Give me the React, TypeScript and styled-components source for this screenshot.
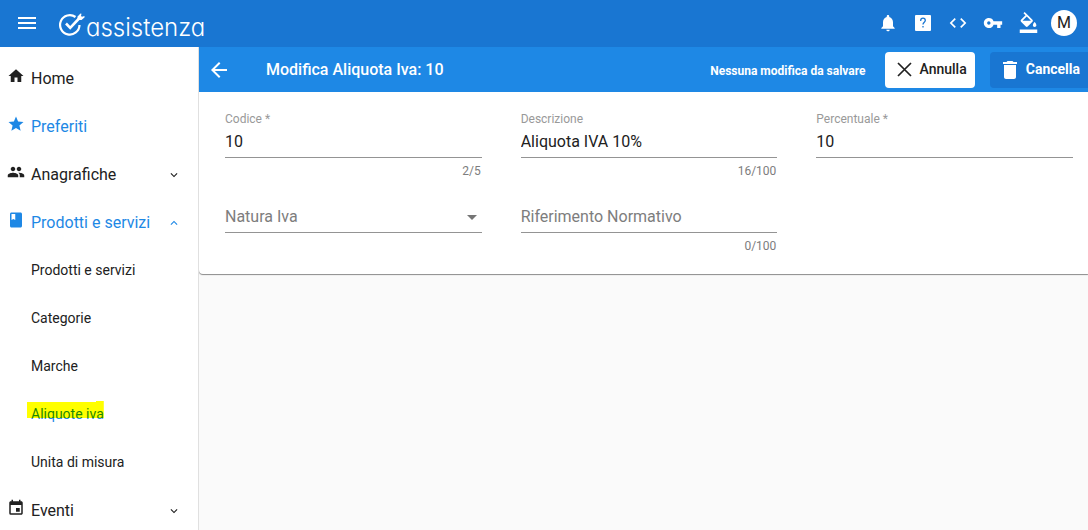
import React, { useState } from 'react';
import styled, { createGlobalStyle, css } from 'styled-components';
import {
  MdArrowBack, MdClass, MdCode, MdDelete, MdEvent, MdExpandLess, MdExpandMore,
  MdFormatColorFill, MdHome, MdMenu, MdNotifications, MdPeople, MdStar, MdVpnKey,
} from 'react-icons/md';

const color = {
  primary: '#1976d2',
  accent: '#1e88e5',
  text: '#212121',
  hint: '#7d7d7d',
  line: '#949494',
};

const GlobalStyle = createGlobalStyle`
  *, *::before, *::after { box-sizing: border-box; }
  body { margin: 0; background: #fafafa; color: ${color.text}; font-family: Roboto, sans-serif; font-size: 16px; }
  button, input, select { font: inherit; color: inherit; }
  svg { display: block; flex: none; }
`;

const Shell = styled.div`
  display: flex;
  flex-direction: column;
  height: 100vh;
  overflow: hidden;
`;

const TopBar = styled.header`
  display: flex;
  align-items: center;
  flex: none;
  height: 47px;
  padding: 0 11px 2px 15px;
  background: ${color.primary};
  color: #fff;
`;

const IconButton = styled.button`
  display: grid;
  place-items: center;
  padding: 0;
  border: 0;
  background: none;
  color: inherit;
  cursor: pointer;
`;

const Brand = styled.a`
  display: flex;
  align-items: center;
  margin-left: 20px;
  padding-top: 4px;
  color: inherit;
  text-decoration: none;
`;

const BrandName = styled.span`
  padding-top: 7px;
  font-family: Inter, sans-serif;
  font-size: 24px;
  font-weight: 300;
  line-height: 28px;
  font-feature-settings: 'cv11';
`;

const Tools = styled.div`
  display: flex;
  align-items: center;
  gap: 15px;
  margin-left: auto;
`;

const Tool = styled(IconButton)`
  width: 20px;
  height: 24px;
`;

const Avatar = styled(IconButton)`
  width: 26px;
  height: 26px;
  margin-left: -2px;
  border-radius: 50%;
  background: #fff;
  color: ${color.text};
  line-height: 26px;
`;

const Body = styled.div`
  display: flex;
  flex: 1;
  min-height: 0;
`;

const Sidebar = styled.nav`
  flex: none;
  width: 199px;
  padding-top: 7px;
  border-right: 1px solid #e0e0e0;
  background: #fff;
  overflow-y: auto;
  scrollbar-width: none;
`;

const NavList = styled.ul`
  margin: 0;
  padding: 0;
  list-style: none;
`;

const NavLink = styled.a<{ $active?: boolean; $sub?: boolean }>`
  display: flex;
  align-items: center;
  height: 48px;
  padding: 0 17px 0 ${p => (p.$sub ? 31 : 7)}px;
  color: ${p => (p.$active ? color.accent : color.text)};
  font-size: ${p => (p.$sub ? 14 : 16)}px;
  text-decoration: none;
`;

const NavIcon = styled.span`
  flex: none;
  width: 24px;
  padding-bottom: 4px;
`;

const NavLabel = styled.span`
  flex: 1;
  white-space: nowrap;
`;

const Chevron = styled.span`
  padding-top: 2px;
`;

const Highlight = styled.span`
  position: relative;
  &::after {
    content: '';
    position: absolute;
    inset: -5px 0 0 -4px;
    height: 17px;
    background: #ff0;
    clip-path: polygon(0 1px, 69px 1px, 69px 0, 100% 0, 100% 100%, 0 100%);
    mix-blend-mode: multiply;
  }
`;

const Main = styled.main`
  flex: 1;
  min-width: 0;
  overflow: hidden;
`;

const ActionBar = styled.div`
  display: flex;
  align-items: center;
  height: 45px;
  padding-left: 8px;
  background: ${color.accent};
  color: #fff;
`;

const Title = styled.h1`
  flex: 1;
  margin: 0 0 0 35px;
  font-size: 16px;
  font-weight: 500;
  white-space: nowrap;
`;

const Status = styled.span`
  margin-right: 19px;
  padding-top: 2px;
  font-size: 12px;
  font-weight: 700;
  white-space: nowrap;
`;

const ActionButton = styled.button<{ $primary?: boolean }>`
  display: flex;
  align-items: center;
  gap: 8px;
  height: 36px;
  padding: 0 8px 0 12px;
  border: 0;
  border-radius: 4px;
  background: #fff;
  color: ${color.text};
  font-size: 14px;
  font-weight: 500;
  cursor: pointer;
  ${p => p.$primary && css`
    gap: 4px;
    margin-left: 15px;
    padding: 0 8px;
    border-radius: 4px 0 0 4px;
    background: ${color.primary};
    color: #fff;
    font-weight: 700;
  `}
`;

const ButtonText = styled.span`
  padding-bottom: 2px;
`;

const Card = styled.form`
  display: grid;
  grid-template-columns: repeat(3, 1fr);
  column-gap: 39px;
  padding: 20px 15px 12px 26px;
  border-radius: 0 0 0 4px;
  background: #fff;
  box-shadow: 0 1px 1px rgba(0, 0, 0, 0.45);
`;

const Field = styled.div`
  height: 75px;
`;

const FieldLabel = styled.label`
  display: block;
  height: 16px;
  color: #999;
  font-size: 12px;
  line-height: 14px;
`;

const controlStyle = css`
  display: block;
  width: 100%;
  height: 30px;
  padding: 0 0 2px;
  border: 0;
  border-bottom: 1px solid ${color.line};
  border-radius: 0;
  outline: 0;
  background: transparent;
`;

const TextInput = styled.input`
  ${controlStyle}
  &::placeholder { color: ${color.hint}; opacity: 1; }
`;

const SelectBox = styled.div`
  position: relative;
`;

const Select = styled.select`
  ${controlStyle}
  appearance: none;
  color: ${color.hint};
`;

const Caret = styled.span`
  position: absolute;
  top: 12px;
  right: 5px;
  border: 5px solid transparent;
  border-top-color: #757575;
  border-bottom: 0;
  pointer-events: none;
`;

const Counter = styled.div`
  padding: 6px 1px 0 0;
  color: ${color.hint};
  font-size: 12px;
  line-height: 14px;
  text-align: right;
`;

function Logo() {
  return (
    <svg width="27" height="24" viewBox="0 0 27 24" fill="none" stroke="#fff" aria-hidden="true">
      <path d="M16.500 4A9.700 9.700 0 1 0 20.500 12" strokeWidth="2.200" />
      <path d="M7 10.500l4.200 4.300L20.500 5" strokeWidth="2.600" />
      <path d="M18.500 6.500L18.500 3.500L21.500 0.500L22.500 0.800L22 3L23 3.700L25.500 3L25.500 4.500L22.500 7L20 7Z" fill="#fff" stroke="none" />
    </svg>
  );
}

function HelpIcon() {
  return (
    <svg width="16" height="16" viewBox="0 0 16 16" fill="none" aria-hidden="true">
      <rect width="16" height="16" rx="1" fill="#fff" />
      <path d="M5.700 6V5.500a2.300 2.300 0 0 1 4.600 0C10.300 7.200 8 7.300 8 9.500M8 11v1.500" stroke={color.primary} strokeWidth="1.300" />
    </svg>
  );
}

function CloseIcon() {
  return (
    <svg width="15" height="15" viewBox="0 0 15 15" stroke="currentColor" strokeWidth="1.7" aria-hidden="true">
      <path d="M1 1l13 13M14 1L1 14" />
    </svg>
  );
}

type TextFieldProps = { id: string; label: string; initial?: string; max?: number; floating?: boolean };

function TextField({ id, label, initial = '', max, floating = true }: TextFieldProps) {
  const [value, setValue] = useState(initial);
  return (
    <Field>
      <FieldLabel htmlFor={id}>{floating ? label : ''}</FieldLabel>
      <TextInput
        id={id}
        value={value}
        maxLength={max}
        aria-label={label}
        placeholder={floating ? undefined : label}
        onChange={e => setValue(e.target.value)}
      />
      {max && <Counter>{value.length}/{max}</Counter>}
    </Field>
  );
}

const products = ['Prodotti e servizi', 'Categorie', 'Marche', 'Aliquote iva', 'Unita di misura'];

export default function App() {
  return (
    <>
      <GlobalStyle />
      <Shell>
        <TopBar>
          <IconButton aria-label="Menu"><MdMenu size={24} /></IconButton>
          <Brand href="#"><Logo /><BrandName>assistenza</BrandName></Brand>
          <Tools>
            <Tool aria-label="Notifiche"><MdNotifications size={20} /></Tool>
            <Tool aria-label="Aiuto"><HelpIcon /></Tool>
            <Tool aria-label="Codice"><MdCode size={20} /></Tool>
            <Tool aria-label="Chiave"><MdVpnKey size={20} /></Tool>
            <Tool aria-label="Tema"><MdFormatColorFill size={21} /></Tool>
            <Avatar aria-label="Profilo">M</Avatar>
          </Tools>
        </TopBar>
        <Body>
          <Sidebar>
            <NavList>
              <li><NavLink href="#"><NavIcon><MdHome size={18} /></NavIcon><NavLabel>Home</NavLabel></NavLink></li>
              <li><NavLink href="#" $active><NavIcon><MdStar size={18} /></NavIcon><NavLabel>Preferiti</NavLabel></NavLink></li>
              <li><NavLink href="#"><NavIcon><MdPeople size={18} /></NavIcon><NavLabel>Anagrafiche</NavLabel><Chevron><MdExpandMore size={14} /></Chevron></NavLink></li>
              <li>
                <NavLink href="#" $active><NavIcon><MdClass size={18} /></NavIcon><NavLabel>Prodotti e servizi</NavLabel><Chevron><MdExpandLess size={14} /></Chevron></NavLink>
                <NavList>
                  {products.map(name => {
                    const current = name === 'Aliquote iva';
                    return (
                      <li key={name}>
                        <NavLink href="#" $sub $active={current}>{current ? <Highlight>{name}</Highlight> : name}</NavLink>
                      </li>
                    );
                  })}
                </NavList>
              </li>
              <li><NavLink href="#"><NavIcon><MdEvent size={18} /></NavIcon><NavLabel>Eventi</NavLabel><Chevron><MdExpandMore size={14} /></Chevron></NavLink></li>
            </NavList>
          </Sidebar>
          <Main>
            <ActionBar>
              <IconButton aria-label="Indietro"><MdArrowBack size={24} /></IconButton>
              <Title>Modifica Aliquota Iva: 10</Title>
              <Status>Nessuna modifica da salvare</Status>
              <ActionButton type="button"><CloseIcon /><ButtonText>Annulla</ButtonText></ActionButton>
              <ActionButton type="button" $primary><MdDelete size={24} /><ButtonText>Cancella</ButtonText></ActionButton>
            </ActionBar>
            <Card>
              <TextField id="codice" label="Codice *" initial="10" max={5} />
              <TextField id="descrizione" label="Descrizione" initial="Aliquota IVA 10%" max={100} />
              <TextField id="percentuale" label="Percentuale *" initial="10" />
              <Field>
                <FieldLabel htmlFor="natura" />
                <SelectBox>
                  <Select id="natura" aria-label="Natura Iva"><option>Natura Iva</option></Select>
                  <Caret />
                </SelectBox>
              </Field>
              <TextField id="riferimento" label="Riferimento Normativo" max={100} floating={false} />
            </Card>
          </Main>
        </Body>
      </Shell>
    </>
  );
}
